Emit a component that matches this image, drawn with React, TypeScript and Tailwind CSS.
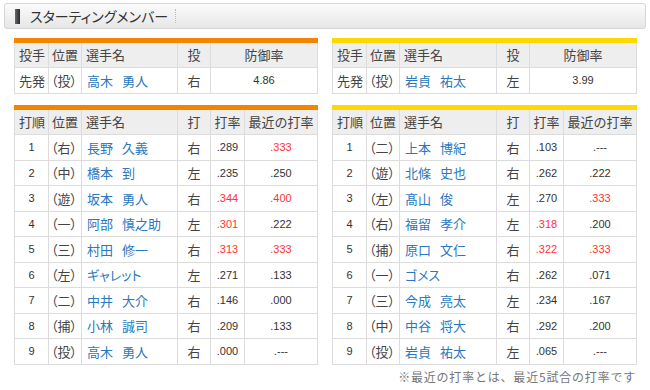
import React from 'react';

interface Batter {
  order: number;
  pos: string;
  name: string;
  hand: string;
  avg: string;
  recent: string;
  avgHot?: boolean;
  recentHot?: boolean;
}

interface Pitcher {
  name: string;
  hand: string;
  era: string;
}

const giants: Batter[] = [
  { order: 1, pos: '（右）', name: '長野　久義', hand: '右', avg: '.289', recent: '.333', recentHot: true },
  { order: 2, pos: '（中）', name: '橋本　到', hand: '左', avg: '.235', recent: '.250' },
  { order: 3, pos: '（遊）', name: '坂本　勇人', hand: '右', avg: '.344', recent: '.400', avgHot: true, recentHot: true },
  { order: 4, pos: '（一）', name: '阿部　慎之助', hand: '左', avg: '.301', recent: '.222', avgHot: true },
  { order: 5, pos: '（三）', name: '村田　修一', hand: '右', avg: '.313', recent: '.333', avgHot: true, recentHot: true },
  { order: 6, pos: '（左）', name: 'ギャレット', hand: '左', avg: '.271', recent: '.133' },
  { order: 7, pos: '（二）', name: '中井　大介', hand: '右', avg: '.146', recent: '.000' },
  { order: 8, pos: '（捕）', name: '小林　誠司', hand: '右', avg: '.209', recent: '.133' },
  { order: 9, pos: '（投）', name: '高木　勇人', hand: '右', avg: '.000', recent: '.---' },
];

const tigers: Batter[] = [
  { order: 1, pos: '（二）', name: '上本　博紀', hand: '右', avg: '.103', recent: '.---' },
  { order: 2, pos: '（遊）', name: '北條　史也', hand: '右', avg: '.262', recent: '.222' },
  { order: 3, pos: '（左）', name: '髙山　俊', hand: '左', avg: '.270', recent: '.333', recentHot: true },
  { order: 4, pos: '（右）', name: '福留　孝介', hand: '左', avg: '.318', recent: '.200', avgHot: true },
  { order: 5, pos: '（捕）', name: '原口　文仁', hand: '右', avg: '.322', recent: '.333', avgHot: true, recentHot: true },
  { order: 6, pos: '（一）', name: 'ゴメス', hand: '右', avg: '.262', recent: '.071' },
  { order: 7, pos: '（三）', name: '今成　亮太', hand: '左', avg: '.234', recent: '.167' },
  { order: 8, pos: '（中）', name: '中谷　将大', hand: '右', avg: '.292', recent: '.200' },
  { order: 9, pos: '（投）', name: '岩貞　祐太', hand: '左', avg: '.065', recent: '.---' },
];

const jp = "font-['Noto_Sans_CJK_JP',sans-serif]";
const num = "font-['Liberation_Sans',Arial,sans-serif] text-[11px]";
const cell = 'border-r border-[#dcdcdc] flex items-center shrink-0';

// family / given name with the narrow gap the site uses
function Name({ name }: { name: string }) {
  const [family, given] = name.split('　');
  return (
    <span className="[font-feature-settings:'palt']">
      {family}
      {given && <span className="ml-[9px]">{given}</span>}
    </span>
  );
}

function Team({ pitcher, batters, right, bar }: { pitcher: Pitcher; batters: Batter[]; right?: boolean; bar: string }) {
  const nameW = right ? 'w-[97px]' : 'w-[96px]';
  return (
    <div className={`flex flex-col ${jp} text-[13px] text-[#444]`}>
      <div className={`h-[5px] ${bar}`} />
      <div className="border-l border-[#dcdcdc]">
        <div className="flex h-[25px] bg-[#eeeeee] border-b border-[#dcdcdc]">
          <div className={`${cell} w-[34px] pl-[4px]`}>投手</div>
          <div className={`${cell} w-[33px] pl-[3px]`}>位置</div>
          <div className={`${cell} ${nameW} pl-[4px]`}>選手名</div>
          <div className={`${cell} w-[33px] justify-center`}>投</div>
          <div className={`${cell} w-[107px] justify-center`}>防御率</div>
        </div>
        <div className="flex h-[26px] bg-white border-b border-[#dcdcdc]">
          <div className={`${cell} w-[34px] pl-[4px]`}>先発</div>
          <div className={`${cell} w-[33px] pl-[2px] [font-feature-settings:'palt']`}>（投）</div>
          <div className={`${cell} ${nameW} pl-[5px] text-[#2a78bd]`}>
            <Name name={pitcher.name} />
          </div>
          <div className={`${cell} w-[33px] justify-center`}>{pitcher.hand}</div>
          <div className={`${cell} w-[107px] justify-center ${num} text-[#333]`}>{pitcher.era}</div>
        </div>
      </div>

      <div className={`h-[5px] mt-[11px] ${bar}`} />
      <div className="border-l border-[#dcdcdc]">
        <div className="flex h-[25px] bg-[#eeeeee] border-b border-[#dcdcdc]">
          <div className={`${cell} w-[34px] pl-[4px]`}>打順</div>
          <div className={`${cell} w-[33px] pl-[3px]`}>位置</div>
          <div className={`${cell} ${nameW} pl-[4px]`}>選手名</div>
          <div className={`${cell} w-[33px] justify-center`}>打</div>
          <div className={`${cell} w-[34px] justify-center`}>打率</div>
          <div className={`${cell} w-[73px] justify-center`}>最近の打率</div>
        </div>
        {batters.map((b) => (
          <div key={b.order} className="flex h-[25.5px] bg-white border-b border-[#dcdcdc]">
            <div className={`${cell} w-[34px] justify-center ${num} text-[#333]`}>{b.order}</div>
            <div className={`${cell} w-[33px] pl-[2px] [font-feature-settings:'palt']`}>{b.pos}</div>
            <div className={`${cell} ${nameW} pl-[5px] text-[#2a78bd]`}>
              <Name name={b.name} />
            </div>
            <div className={`${cell} w-[33px] justify-center`}>{b.hand}</div>
            <div className={`${cell} w-[34px] justify-center ${num} ${b.avgHot ? 'text-[#ff3333]' : 'text-[#333]'}`}>{b.avg}</div>
            <div className={`${cell} w-[73px] justify-center ${num} ${b.recentHot ? 'text-[#ff3333]' : 'text-[#333]'}`}>{b.recent}</div>
          </div>
        ))}
      </div>
    </div>
  );
}

export default function App() {
  return (
    <div className="w-[650px] h-[390px] bg-white overflow-hidden pt-[3px]">
      <div className="mx-[4px] h-[26px] rounded-[3px] border border-[#d6d6d6] bg-gradient-to-b from-[#fbfbfb] via-[#f1f1f1] to-[#e6e6e6] flex items-center pl-[10px]">
        <div className="w-[5px] h-[15px] bg-gradient-to-r from-[#6a6a6a] to-[#2a2a2a]" />
        <span className={`${jp} text-[14px] text-[#333] ml-[10px] [font-feature-settings:'palt']`}>スターティングメンバー</span>
        <div className="ml-[7px] h-[14px] border-l border-dotted border-[#bbbbbb]" />
      </div>

      <div className="grid grid-cols-[304px_305px] gap-[14px] px-[14px] mt-[9px]">
        <Team pitcher={{ name: '高木　勇人', hand: '右', era: '4.86' }} batters={giants} bar="bg-[#f28500]" />
        <Team pitcher={{ name: '岩貞　祐太', hand: '左', era: '3.99' }} batters={tigers} right bar="bg-[#ffd800]" />
      </div>

      <div className={`${jp} text-[12px] leading-[18px] text-[#777] text-right pr-[14px] mt-[3px] tracking-[0.8px]`}>
        ※最近の打率とは、最近5試合の打率です
      </div>
    </div>
  );
}
